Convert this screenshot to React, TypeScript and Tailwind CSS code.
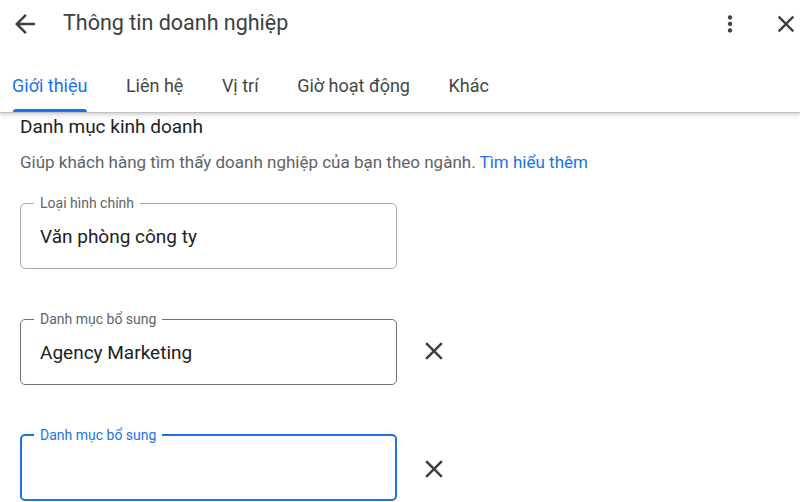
import React from "react";

const font = { fontFamily: "Roboto, 'Noto Sans', Arial, sans-serif" };

function CloseIcon({ size = 30, color = "#202124" }: { size?: number; color?: string }) {
  return (
    <svg width={size} height={size} viewBox="0 0 24 24" fill={color}>
      <path d="M19 6.41L17.59 5 12 10.59 6.41 5 5 6.41 10.59 12 5 17.59 6.41 19 12 13.41 17.59 19 19 17.59 13.41 12z" />
    </svg>
  );
}

function Field({
  label,
  value,
  variant,
  removable,
}: {
  label: string;
  value?: string;
  variant: "light" | "dark" | "focus";
  removable?: boolean;
}) {
  const fs =
    variant === "focus"
      ? "border-2 border-[#1a73e8] pl-[12px]"
      : variant === "dark"
      ? "border border-[#6f6f6f] pl-[13px]"
      : "border border-[#a8a8a8] pl-[13px]";
  const lg = variant === "focus" ? "text-[#1a73e8]" : "text-[#5f6368]";
  return (
    <div className="flex items-start">
      <fieldset className={`w-[377px] rounded-[5px] ${fs}`}>
        <legend className={`px-[6px] text-[14px] leading-[16px] ${lg}`}>{label}</legend>
        <div
          className={`flex items-center pb-[5px] pl-[6px] text-[19px] text-[#202124] ${
            variant === "focus" ? "h-[56px]" : "h-[57px]"
          }`}
        >
          {value}
        </div>
      </fieldset>
      {removable && (
        <div className={`ml-[22px] ${variant === "focus" ? "mt-[27px]" : "mt-[25px]"}`}>
          <CloseIcon size={30} color="#3c4043" />
        </div>
      )}
    </div>
  );
}

export default function App() {
  const tabs = ["Giới thiệu", "Liên hệ", "Vị trí", "Giờ hoạt động", "Khác"];
  return (
    <div className="w-[800px] h-[502px] overflow-hidden bg-white" style={font}>
      <div className="relative z-10 bg-white border-b border-[#c4c4c4] shadow-[0_2px_4px_rgba(0,0,0,0.18)]">
        <div className="flex items-center h-[46px]">
          <div className="ml-[10px] mt-[2px]">
            <svg width="30" height="30" viewBox="0 0 24 24" fill="#3c4043">
              <path d="M20 11H7.83l5.59-5.59L12 4l-8 8 8 8 1.41-1.41L7.83 13H20v-2z" />
            </svg>
          </div>
          <div className="ml-[23px] text-[21.5px] text-[#3c4043]">Thông tin doanh nghiệp</div>
          <div className="flex-1" />
          <div className="mr-[29px] mt-[1px]">
            <svg width="26" height="26" viewBox="0 0 24 24" fill="#3c4043">
              <circle cx="12" cy="6" r="2" />
              <circle cx="12" cy="12" r="2" />
              <circle cx="12" cy="18" r="2" />
            </svg>
          </div>
          <div className="mt-[1px]">
            <CloseIcon size={28} color="#3c4043" />
          </div>
        </div>
        <div className="flex h-[66px] pl-[12px] gap-[38.5px]">
          {tabs.map((t, i) => (
            <div
              key={t}
              className={`relative flex items-center h-full pt-[12px] text-[18px] ${
                i === 0 ? "text-[#1a73e8]" : "text-[#444746]"
              }`}
            >
              {t}
              {i === 0 && (
                <div className="absolute left-[1px] right-0 bottom-0 h-[3px] rounded-t-[3px] bg-[#1a73e8]" />
              )}
            </div>
          ))}
        </div>
      </div>
      <div className="pl-[20px]">
        <div className="pt-[2px] text-[19px] leading-[24px] text-[#202124]">Danh mục kinh doanh</div>
        <div className="mt-[12px] text-[17px] leading-[22px] text-[#5f6368]">
          Giúp khách hàng tìm thấy doanh nghiệp của bạn theo ngành.{" "}
          <span className="text-[#1a73e8]">Tìm hiểu thêm</span>
        </div>
        <div className="mt-[22px] flex flex-col gap-[42px]">
          <Field label="Loại hình chính" value="Văn phòng công ty" variant="light" />
          <Field label="Danh mục bổ sung" value="Agency Marketing" variant="dark" removable />
          <Field label="Danh mục bổ sung" variant="focus" removable />
        </div>
      </div>
    </div>
  );
}
